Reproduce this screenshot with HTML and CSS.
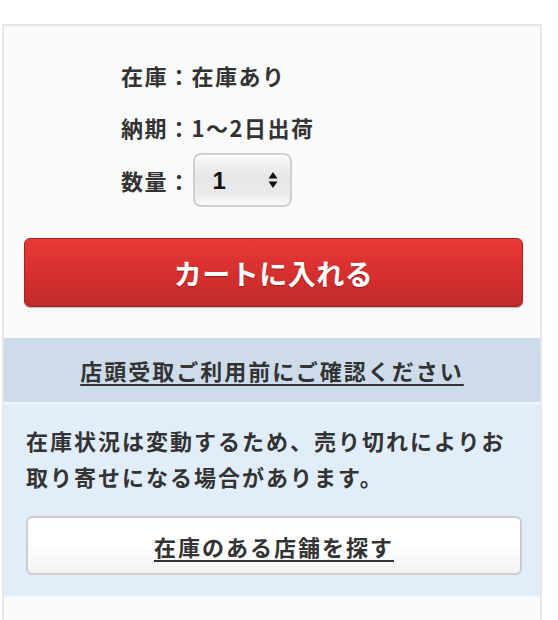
FILE: index.html
```html
<!DOCTYPE html>
<html lang="ja">
<head>
    <meta charset="UTF-8">
    <meta name="viewport" content="width=device-width, initial-scale=1.0">
    <title>在庫・数量</title>
    <link rel="stylesheet" href="styles.css">
</head>
<body>
    <div class="panel">
        <div class="info">
            <div class="info-row">在庫：在庫あり</div>
            <div class="info-row">納期：1〜2日出荷</div>
            <div class="info-row">
                <span>数量：</span>
                <span class="qty">
                    <select class="qty-select">
                        <option>1</option>
                        <option>2</option>
                        <option>3</option>
                        <option>4</option>
                        <option>5</option>
                    </select>
                    <svg class="qty-arrows" width="10" height="18" viewBox="0 0 10 18">
                        <path d="M5 1 L9.5 7.5 H0.5 Z" fill="#111"/>
                        <path d="M5 17 L9.5 10.5 H0.5 Z" fill="#111"/>
                    </svg>
                </span>
            </div>
        </div>

        <button class="cart-btn">カートに入れる</button>

        <div class="store-head">
            <a href="#" class="store-link">店頭受取ご利用前にご確認ください</a>
        </div>
        <div class="store-body">
            <p class="store-note">在庫状況は変動するため、売り切れによりお取り寄せになる場合があります。</p>
            <button class="store-btn"><span>在庫のある店舗を探す</span></button>
        </div>
        <div class="panel-foot"></div>
    </div>
</body>
</html>
```

FILE: styles.css
```css
body {
    margin: 0;
    background-color: #ffffff;
    font-family: "Noto Sans CJK JP", "Noto Sans", sans-serif;
    color: #333333;
}

.panel {
    width: 536px;
    margin: 24px 0 0 2px;
    border: 2px solid #e6e6e6;
    border-bottom: none;
    background-color: #fafafa;
}

.info {
    padding: 23px 0 0 117px;
}

.info-row {
    display: flex;
    align-items: center;
    height: 52px;
    font-size: 22px;
    font-weight: bold;
    letter-spacing: 1.5px;
}

.info-row:last-child {
    height: 54px;
}

.qty {
    position: relative;
    display: inline-block;
    margin-left: 1px;
}

.qty-select {
    -webkit-appearance: none;
    appearance: none;
    width: 99px;
    height: 54px;
    padding: 0 0 0 18px;
    border: 2px solid #cfcfcf;
    border-radius: 8px;
    background: linear-gradient(#f8f8f8, #e6e6e6 45%, #ebebeb 80%, #fafafa);
    font-family: "Liberation Sans", sans-serif;
    font-size: 24px;
    font-weight: bold;
    color: #111111;
    box-shadow: inset 0 1px 0 #ffffff;
}

.qty-arrows {
    position: absolute;
    top: 18px;
    right: 14px;
    pointer-events: none;
}

.cart-btn {
    display: block;
    width: 499px;
    height: 69px;
    margin: 31px 0 0 20px;
    border: 1px solid #a82222;
    border-radius: 6px;
    background: linear-gradient(#e83a38, #d6302f 50%, #c12a2a);
    color: #ffffff;
    font-family: "Noto Sans CJK JP", sans-serif;
    font-size: 28px;
    font-weight: bold;
    letter-spacing: 0.5px;
    text-shadow: 0 1px 1px rgba(0, 0, 0, 0.35);
    box-shadow: 0 1px 1px rgba(0, 0, 0, 0.25);
    cursor: pointer;
}

.store-head {
    margin-top: 31px;
    height: 64px;
    display: flex;
    align-items: center;
    justify-content: center;
    background-color: #cddbeb;
    border-bottom: 2px solid #f0f5fb;
}

.store-link {
    color: #333333;
    font-size: 22px;
    font-weight: bold;
    letter-spacing: 2px;
    text-decoration: underline;
    text-underline-offset: 4px;
    text-decoration-thickness: 2px;
}

.store-body {
    padding: 18px 18px 21px 22px;
    background-color: #e1edf9;
}

.store-note {
    margin: 0;
    font-size: 22px;
    font-weight: bold;
    line-height: 36px;
    letter-spacing: 2px;
}

.store-btn {
    display: block;
    width: 496px;
    height: 59px;
    margin: 22px 0 0 0;
    border: 2px solid #cccccc;
    border-radius: 6px;
    background: linear-gradient(#ffffff, #ffffff 50%, #f2f2f2);
    font-family: "Noto Sans CJK JP", sans-serif;
    font-size: 22px;
    font-weight: bold;
    letter-spacing: 2px;
    color: #333333;
    cursor: pointer;
}

.store-btn span {
    text-decoration: underline;
    text-underline-offset: 4px;
    text-decoration-thickness: 2px;
}

.panel-foot {
    height: 30px;
    border-top: 2px solid #f5f8fb;
}
```
